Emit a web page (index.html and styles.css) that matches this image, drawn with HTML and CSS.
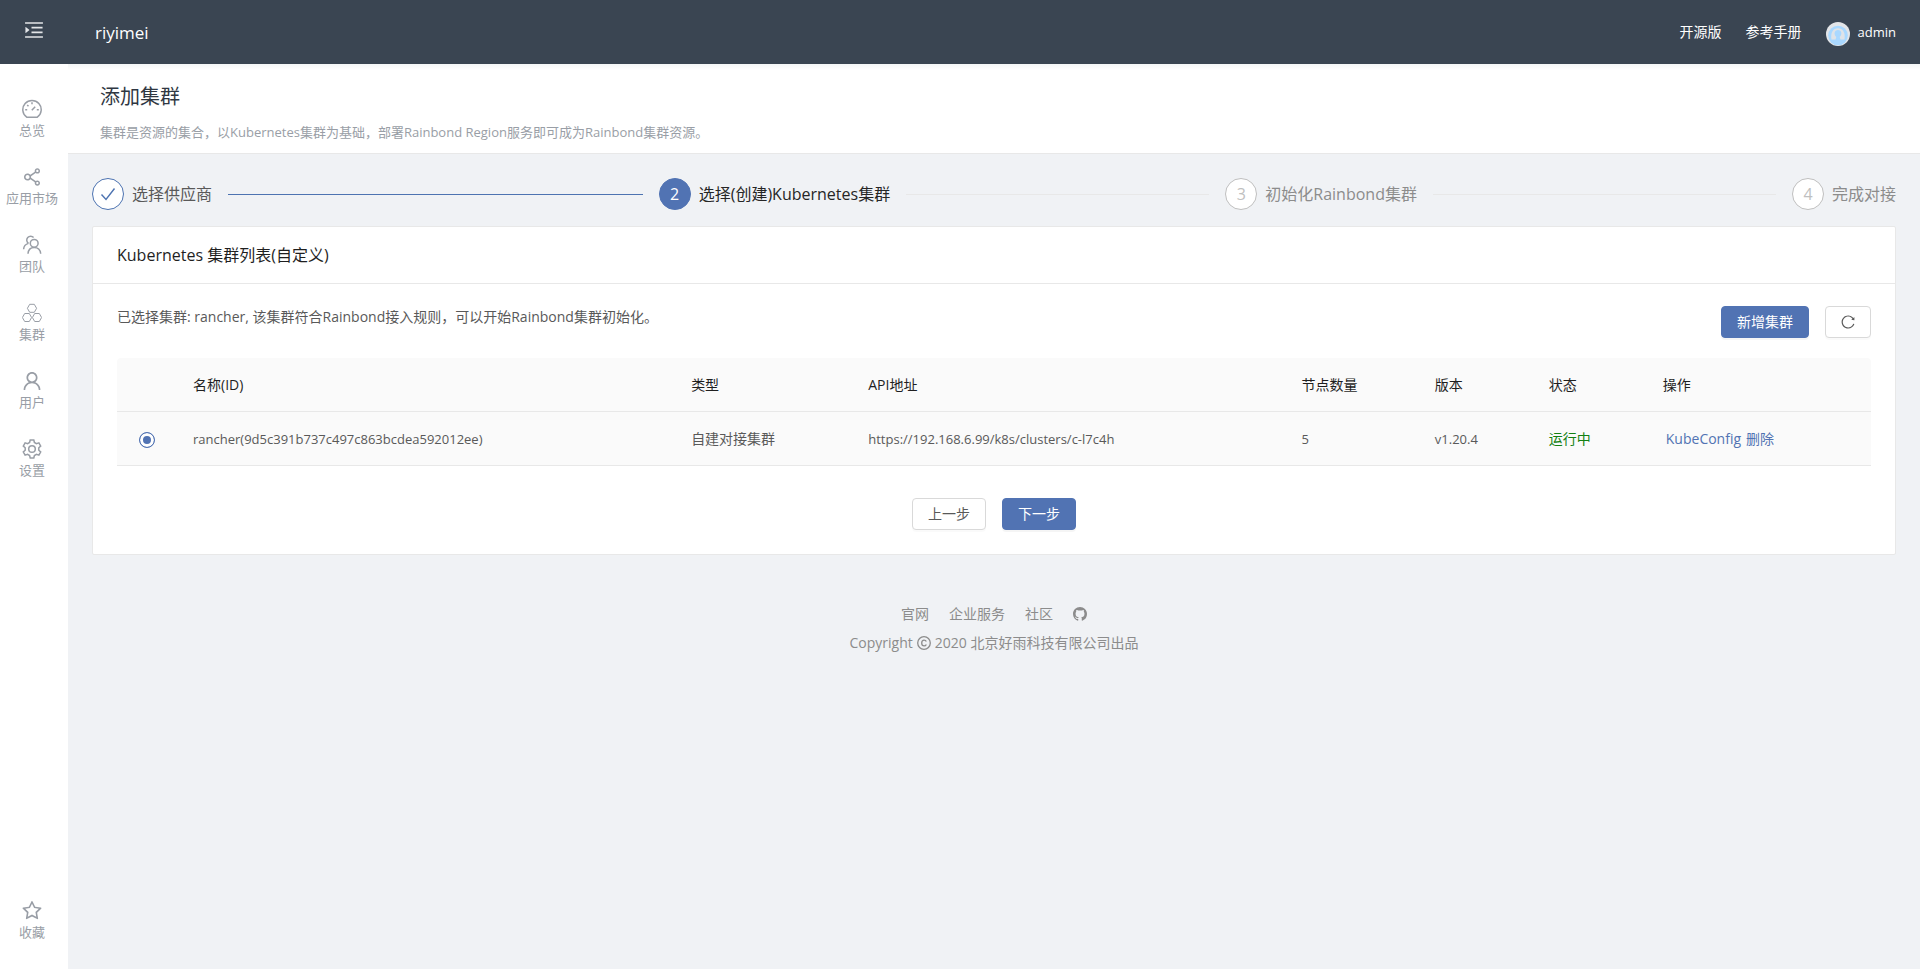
FILE: index.html
```html
<!DOCTYPE html>
<html lang="zh-CN">
<head>
<meta charset="utf-8">
<title>添加集群</title>
<link rel="stylesheet" href="styles.css">
</head>
<body>
<header class="topbar">
  <button class="menu-toggle" type="button" aria-label="展开菜单">
    <svg class="icon icon-20" viewBox="64 64 896 896"><path d="M400 370h496v72H400zM400 582h496v72H400zM112 160h800v72H112zM112 792h800v72H112zM142.400 642.100L298.700 519a8.840 8.840 0 0 0 0-13.900L142.400 381.900c-5.800-4.600-14.400-.5-14.400 6.900v246.300a8.900 8.900 0 0 0 14.400 7z"/></svg>
  </button>
  <span class="brand">riyimei</span>
  <nav class="top-links">
    <a href="#">开源版</a>
    <a href="#">参考手册</a>
    <a href="#" class="account">
      <svg class="avatar" viewBox="0 0 24 24"><circle cx="12" cy="12" r="12" fill="#e3e5e8"/><circle cx="12" cy="13.500" r="9.800" fill="#a9d8ff"/><path d="M5.500 17.500C4.300 11 7 6.200 12 6.200s7.700 4.800 6.500 11.300h-4l-.8-2.500c2.800-2.500 2-7-1.700-7s-4.500 4.500-1.700 7l-.8 2.500z" fill="#dfe3e8"/></svg>
      <span>admin</span>
    </a>
  </nav>
</header>
<div class="shell">
  <aside class="sidebar">
    <nav class="side-nav">
      <a href="#" class="side-item">
        <svg class="icon icon-20 line" viewBox="0 0 20 20"><path d="M4.700 18.200A9.200 9.200 0 1 1 15.300 18.200z"/><path d="M9.800 11.200l3.400-3.400M10 3.200v2M3.200 10.800h2M14.800 10.800h2M5.200 6l1.300 1.300"/></svg>
        <span>总览</span>
      </a>
      <a href="#" class="side-item">
        <svg class="icon icon-20" viewBox="64 64 896 896"><path d="M752 664c-28.500 0-54.800 10-75.400 26.700L469.400 540.800a160.680 160.680 0 0 0 0-57.600l207.200-149.900C697.200 350 723.500 360 752 360c66.200 0 120-53.800 120-120s-53.800-120-120-120-120 53.800-120 120c0 11.600 1.600 22.700 4.700 33.300L439.900 415.800C410.700 377.100 364.300 352 312 352c-88.400 0-160 71.600-160 160s71.600 160 160 160c52.300 0 98.700-25.100 127.900-63.800l196.800 142.500c-3.100 10.600-4.700 21.800-4.700 33.300 0 66.200 53.800 120 120 120s120-53.800 120-120-53.800-120-120-120zm0-476c28.700 0 52 23.300 52 52s-23.300 52-52 52-52-23.300-52-52 23.300-52 52-52zM312 600c-48.500 0-88-39.500-88-88s39.500-88 88-88 88 39.500 88 88-39.500 88-88 88zM752 836c-28.700 0-52-23.300-52-52s23.300-52 52-52 52 23.300 52 52-23.300 52-52 52z"/></svg>
        <span>应用市场</span>
      </a>
      <a href="#" class="side-item">
        <svg class="icon icon-20 line" viewBox="0 0 20 20"><circle cx="12.200" cy="8.300" r="3.900"/><path d="M6 18.800c.2-3.900 2.700-6.400 6.200-6.400s6.300 2.500 6.500 6.400"/><path d="M11.600 2.600a3.900 3.900 0 1 0-5.100 5.800M6.500 8.400C3.500 9.200 1.800 11.200 1.600 14.200"/></svg>
        <span>团队</span>
      </a>
      <a href="#" class="side-item">
        <svg class="icon icon-20 thin" viewBox="0 0 20 20"><path d="M7.700 1.300h4.600l2.300 4-2.300 4H7.700l-2.300-4zM2.700 10.500h4.600l2.300 4-2.300 4H2.700l-2.300-4zM12.700 10.500h4.600l2.300 4-2.300 4h-4.600l-2.300-4z"/></svg>
        <span>集群</span>
      </a>
      <a href="#" class="side-item">
        <svg class="icon icon-20" viewBox="64 64 896 896"><path d="M858.500 763.600a374 374 0 0 0-80.600-119.500 375.630 375.630 0 0 0-119.500-80.600c-.4-.2-.8-.3-1.200-.5C719.500 518 760 444.700 760 362c0-137-111-248-248-248S264 225 264 362c0 82.700 40.500 156 102.800 201.100-.4.200-.8.300-1.200.5-44.800 18.900-85 46-119.500 80.600a375.630 375.630 0 0 0-80.600 119.500A371.700 371.700 0 0 0 136 901.800a8 8 0 0 0 8 8.200h60c4.400 0 7.900-3.500 8-7.800 2-77.200 33-149.500 87.800-204.300 56.700-56.700 132-87.900 212.200-87.900s155.500 31.200 212.200 87.900C779 752.700 810 825 812 902.200c.1 4.400 3.600 7.800 8 7.800h60a8 8 0 0 0 8-8.200c-1-47.800-10.900-94.300-29.500-138.200zM512 534c-45.900 0-89.100-17.900-121.600-50.400S340 407.900 340 362c0-45.900 17.900-89.100 50.400-121.600S466.100 190 512 190s89.100 17.900 121.600 50.400S684 316.100 684 362c0 45.900-17.900 89.100-50.400 121.600S557.900 534 512 534z"/></svg>
        <span>用户</span>
      </a>
      <a href="#" class="side-item">
        <svg class="icon icon-20 line" viewBox="0 0 20 20"><circle cx="10" cy="10" r="3.300"/><path d="M8.200 1h3.600l.6 2.500 2 1.200 2.500-.8 1.800 3.100-1.900 1.800v2.400l1.900 1.800-1.800 3.100-2.500-.8-2 1.200-.6 2.500H8.200l-.6-2.500-2-1.200-2.500.8L1.300 13l1.900-1.800V8.800L1.300 7l1.800-3.100 2.500.8 2-1.200z"/></svg>
        <span>设置</span>
      </a>
    </nav>
    <a href="#" class="side-item">
      <svg class="icon icon-20" viewBox="64 64 896 896"><path d="M908.100 353.100l-253.900-36.900L540.700 86.100c-3.100-6.300-8.200-11.400-14.500-14.500-15.800-7.800-35-1.300-42.900 14.500L369.800 316.200l-253.900 36.900c-7 1-13.400 4.300-18.300 9.300a32.050 32.050 0 0 0 .6 45.300l183.700 179.100-43.400 252.900a31.950 31.950 0 0 0 46.400 33.700L512 754l227.100 119.400c6.200 3.300 13.400 4.400 20.300 3.200 17.400-3 29.100-19.500 26.100-36.900l-43.400-252.900 183.700-179.100c5-4.900 8.300-11.300 9.300-18.300 2.700-17.500-9.500-33.700-27-36.300zM664.800 561.600l36.100 210.300L512 672.700 323.100 772l36.100-210.300-152.800-149L417.600 382 512 190.700 606.400 382l211.200 30.700-152.800 148.900z"/></svg>
      <span>收藏</span>
    </a>
  </aside>
  <main class="main">
    <section class="page-head">
      <h1>添加集群</h1>
      <p>集群是资源的集合，以Kubernetes集群为基础，部署Rainbond Region服务即可成为Rainbond集群资源。</p>
    </section>
    <div class="content">
      <ol class="steps">
        <li class="step done">
          <span class="step-dot"><svg class="icon icon-16 check" viewBox="0 0 16 16"><path d="M1.500 8.500l4.500 5 8.500-11"/></svg></span>
          <span class="step-title">选择供应商</span>
        </li>
        <li class="step current"><span class="step-dot">2</span><span class="step-title">选择(创建)Kubernetes集群</span></li>
        <li class="step"><span class="step-dot">3</span><span class="step-title">初始化Rainbond集群</span></li>
        <li class="step"><span class="step-dot">4</span><span class="step-title">完成对接</span></li>
      </ol>
      <section class="card">
        <h2 class="card-head">Kubernetes 集群列表(自定义)</h2>
        <div class="card-body">
          <div class="toolbar">
            <p>已选择集群: rancher, 该集群符合Rainbond接入规则，可以开始Rainbond集群初始化。</p>
            <div class="actions">
              <button class="btn primary" type="button">新增集群</button>
              <button class="btn" type="button" aria-label="刷新"><svg class="icon icon-14" viewBox="64 64 896 896"><path d="M909.100 209.300l-56.400 44.100C775.800 155.100 656.200 92 521.900 92 290 92 102.300 279.500 102 511.500 101.700 743.700 289.800 932 521.900 932c181.300 0 335.800-115 394.600-276.100 1.500-4.200-.7-8.900-4.900-10.300l-56.700-19.500a8 8 0 0 0-10.100 4.800c-1.800 5-3.800 10-5.900 14.900-17.300 41-42.100 77.800-73.700 109.400A344.770 344.770 0 0 1 655.900 829c-42.300 17.900-87.400 27-133.800 27-46.500 0-91.500-9.100-133.800-27A341.500 341.500 0 0 1 279 755.200a342.160 342.160 0 0 1-73.700-109.400c-17.900-42.400-27-87.400-27-133.900s9.100-91.500 27-133.900c17.300-41 42.100-77.800 73.700-109.400 31.600-31.600 68.400-56.400 109.300-73.800 42.300-17.900 87.400-27 133.800-27 46.500 0 91.500 9.100 133.800 27a341.500 341.500 0 0 1 109.300 73.800c9.900 9.900 19.200 20.400 27.800 31.400l-60.200 47a8 8 0 0 0 3 14.100l175.600 43c5 1.200 9.900-2.600 9.900-7.700l.8-180.900c-.1-6.600-7.800-10.300-13-6.200z"/></svg></button>
            </div>
          </div>
          <table class="clusters">
            <colgroup><col class="c-pick"><col class="c-name"><col class="c-type"><col class="c-api"><col class="c-nodes"><col class="c-ver"><col class="c-state"><col></colgroup>
            <thead>
              <tr><th></th><th>名称(ID)</th><th>类型</th><th>API地址</th><th>节点数量</th><th>版本</th><th>状态</th><th>操作</th></tr>
            </thead>
            <tbody>
              <tr>
                <td class="pick"><input type="radio" name="cluster" class="radio" aria-label="rancher" checked></td>
                <td class="code">rancher(9d5c391b737c497c863bcdea592012ee)</td>
                <td>自建对接集群</td>
                <td class="code">https://192.168.6.99/k8s/clusters/c-l7c4h</td>
                <td class="code">5</td>
                <td class="code">v1.20.4</td>
                <td class="running">运行中</td>
                <td><div class="ops"><a href="#">KubeConfig</a><a href="#">删除</a></div></td>
              </tr>
            </tbody>
          </table>
          <div class="pager">
            <button class="btn" type="button">上一步</button>
            <button class="btn primary" type="button">下一步</button>
          </div>
        </div>
      </section>
    </div>
    <footer class="footer">
      <nav class="foot-links">
        <a href="#">官网</a>
        <a href="#">企业服务</a>
        <a href="#">社区</a>
        <a href="#" aria-label="GitHub"><svg class="icon icon-14" viewBox="0 0 16 16"><path d="M8 0C3.580 0 0 3.580 0 8c0 3.540 2.290 6.530 5.470 7.590.4.070.55-.17.55-.38 0-.19-.01-.82-.01-1.490-2.010.37-2.530-.49-2.690-.94-.09-.23-.48-.94-.82-1.130-.28-.15-.68-.52-.01-.53.63-.01 1.080.58 1.230.82.72 1.210 1.870.87 2.330.66.07-.52.28-.87.51-1.070-1.780-.2-3.640-.89-3.640-3.950 0-.87.31-1.590.82-2.150-.08-.2-.36-1.020.08-2.120 0 0 .67-.21 2.200.82.64-.18 1.320-.27 2-.27.68 0 1.360.09 2 .27 1.530-1.040 2.200-.82 2.200-.82.44 1.100.16 1.920.08 2.120.51.56.82 1.270.82 2.150 0 3.070-1.870 3.750-3.650 3.950.29.25.54.73.54 1.480 0 1.070-.01 1.930-.01 2.200 0 .21.15.46.55.38A8.013 8.013 0 0 0 16 8c0-4.420-3.580-8-8-8z"/></svg></a>
      </nav>
      <p class="copyright">Copyright
        <svg class="icon icon-14 line" viewBox="0 0 14 14"><circle cx="7" cy="7" r="6.300"/><path d="M9.300 5.600C8.900 4.600 8.100 4.100 7.100 4.100 5.600 4.100 4.700 5.200 4.700 7s.9 2.900 2.400 2.900c1 0 1.800-.5 2.200-1.500"/></svg>
        2020 北京好雨科技有限公司出品</p>
    </footer>
  </main>
</div>
</body>
</html>
```
FILE: styles.css
```css
* { box-sizing: border-box; }

body {
  margin: 0;
  min-height: 100vh;
  display: flex;
  flex-direction: column;
  background: #f0f2f5;
  color: #595959;
  font: 14px/22px "Open Sans", "Noto Sans CJK SC", sans-serif;
}

h1, h2, p, ol { margin: 0; padding: 0; }
a { color: inherit; text-decoration: none; }
button { font: inherit; cursor: pointer; }

.icon { display: block; fill: currentColor; }
.icon-20 { width: 20px; height: 20px; }
.icon-16 { width: 16px; height: 16px; }
.icon-14 { width: 14px; height: 14px; }
.line { fill: none; stroke: currentColor; stroke-width: 1.5; }
.thin { fill: none; stroke: currentColor; stroke-width: 1; }
.icon-14.line { stroke-width: 1.3; }

.topbar {
  position: relative;
  z-index: 1;
  display: flex;
  align-items: center;
  height: 64px;
  padding-right: 24px;
  background: #3a4552;
  color: #fff;
}
.menu-toggle {
  width: 68px;
  padding: 0 0 4px 24px;
  border: 0;
  background: none;
  color: #e3e5e8;
}
.brand { padding: 2px 0 0 27px; font-size: 17px; line-height: 28px; }
.top-links { display: flex; align-items: center; gap: 24px; margin-left: auto; }
.account { display: flex; align-items: center; gap: 8px; font-size: 13px; }
.avatar { width: 24px; height: 24px; margin-top: 3px; }

.shell { flex: 1; display: flex; }

.sidebar {
  flex: none;
  display: flex;
  flex-direction: column;
  justify-content: space-between;
  width: 68px;
  padding: 21px 4px 14px 0;
  background: #fff;
  color: #999ea6;
}
.side-item {
  display: flex;
  flex-direction: column;
  align-items: center;
  justify-content: center;
  gap: 1px;
  height: 68px;
  font-size: 13px;
  line-height: 20px;
  white-space: nowrap;
}

.main { flex: 1; min-width: 0; }
.page-head {
  padding: 17px 32px 9px;
  border-bottom: 1px solid #e8e8e8;
  background: linear-gradient(#f3f6f6, #fff 6px);
}
.page-head h1 { margin-bottom: 8px; color: #2f3742; font-size: 20px; font-weight: 400; line-height: 32px; }
.page-head p { color: #999ea6; font-size: 13px; line-height: 23px; }

.content { padding: 24px; }

.steps { display: flex; gap: 16px; margin-bottom: 16px; list-style: none; }
.step {
  flex: 1;
  display: flex;
  align-items: center;
  color: #8c8c8c;
  font-size: 16px;
  line-height: 32px;
  white-space: nowrap;
}
.step:last-child { flex: none; }
.step:not(:last-child)::after {
  content: "";
  flex: 1;
  height: 1px;
  margin-left: 16px;
  background: #e8e8e8;
}
.step-dot {
  flex: none;
  display: flex;
  align-items: center;
  justify-content: center;
  width: 32px;
  height: 32px;
  margin-right: 8px;
  border: 1px solid #bfbfbf;
  border-radius: 50%;
  background: #fff;
  color: #bfbfbf;
}
.done { color: #595959; }
.done .step-dot { border-color: #4d73b1; color: #4d73b1; }
.step.done::after { background: #4d73b1; }
.current { color: #262626; }
.current .step-dot { border-color: #5173b3; background: #5173b3; color: #fff; }
.check { fill: none; stroke: currentColor; stroke-width: 1.4; }

.card { border: 1px solid #e8e8e8; border-radius: 2px; background: #fff; }
.card-head {
  padding: 16px 24px;
  border-bottom: 1px solid #e8e8e8;
  color: #1f1f1f;
  font-size: 16px;
  font-weight: 400;
  line-height: 24px;
}
.card-body { padding: 22px 24px 24px; }

.toolbar { display: flex; justify-content: space-between; margin-bottom: 20px; }
.actions { display: flex; gap: 16px; }
.btn {
  display: inline-flex;
  align-items: center;
  height: 32px;
  padding: 0 15px;
  border: 1px solid #d9d9d9;
  border-radius: 4px;
  background: #fff;
  color: #595959;
  box-shadow: 0 2px 0 rgba(0, 0, 0, .02);
}
.primary { border-color: #5173b3; background: #5173b3; color: #fff; box-shadow: 0 2px 0 rgba(0, 0, 0, .04); }

.clusters { width: 100%; table-layout: fixed; border-collapse: separate; border-spacing: 0; }
.c-pick { width: 60px; }
.c-name { width: 28.4%; }
.c-type { width: 10.1%; }
.c-api { width: 24.7%; }
.c-nodes { width: 7.6%; }
.c-ver, .c-state { width: 6.5%; }
.clusters th, .clusters td {
  height: 54px;
  padding: 0 16px;
  border-bottom: 1px solid #e8e8e8;
  background: #fafafa;
  text-align: left;
  white-space: nowrap;
}
.clusters th { color: #1f1f1f; font-weight: 400; }
.clusters th:first-child { border-top-left-radius: 4px; }
.clusters th:last-child { border-top-right-radius: 4px; }
.clusters .pick { padding: 0; text-align: center; }
.clusters .code { font-size: 13px; }
.clusters .running { color: #128012; }
.radio {
  appearance: none;
  width: 16px;
  height: 16px;
  margin: 0;
  border: 1px solid #5173b3;
  border-radius: 50%;
  background: #5173b3;
  box-shadow: inset 0 0 0 3px #fff;
  vertical-align: middle;
}
.ops { display: flex; gap: 5px; padding-left: 3px; color: #5173b3; }

.pager { display: flex; justify-content: center; gap: 16px; margin-top: 32px; }

.footer { display: flex; flex-direction: column; align-items: center; gap: 7px; padding: 24px 16px; color: #8c8c8c; }
.foot-links { display: flex; align-items: center; gap: 20px; }
.copyright { display: flex; align-items: center; gap: 4px; }
```
